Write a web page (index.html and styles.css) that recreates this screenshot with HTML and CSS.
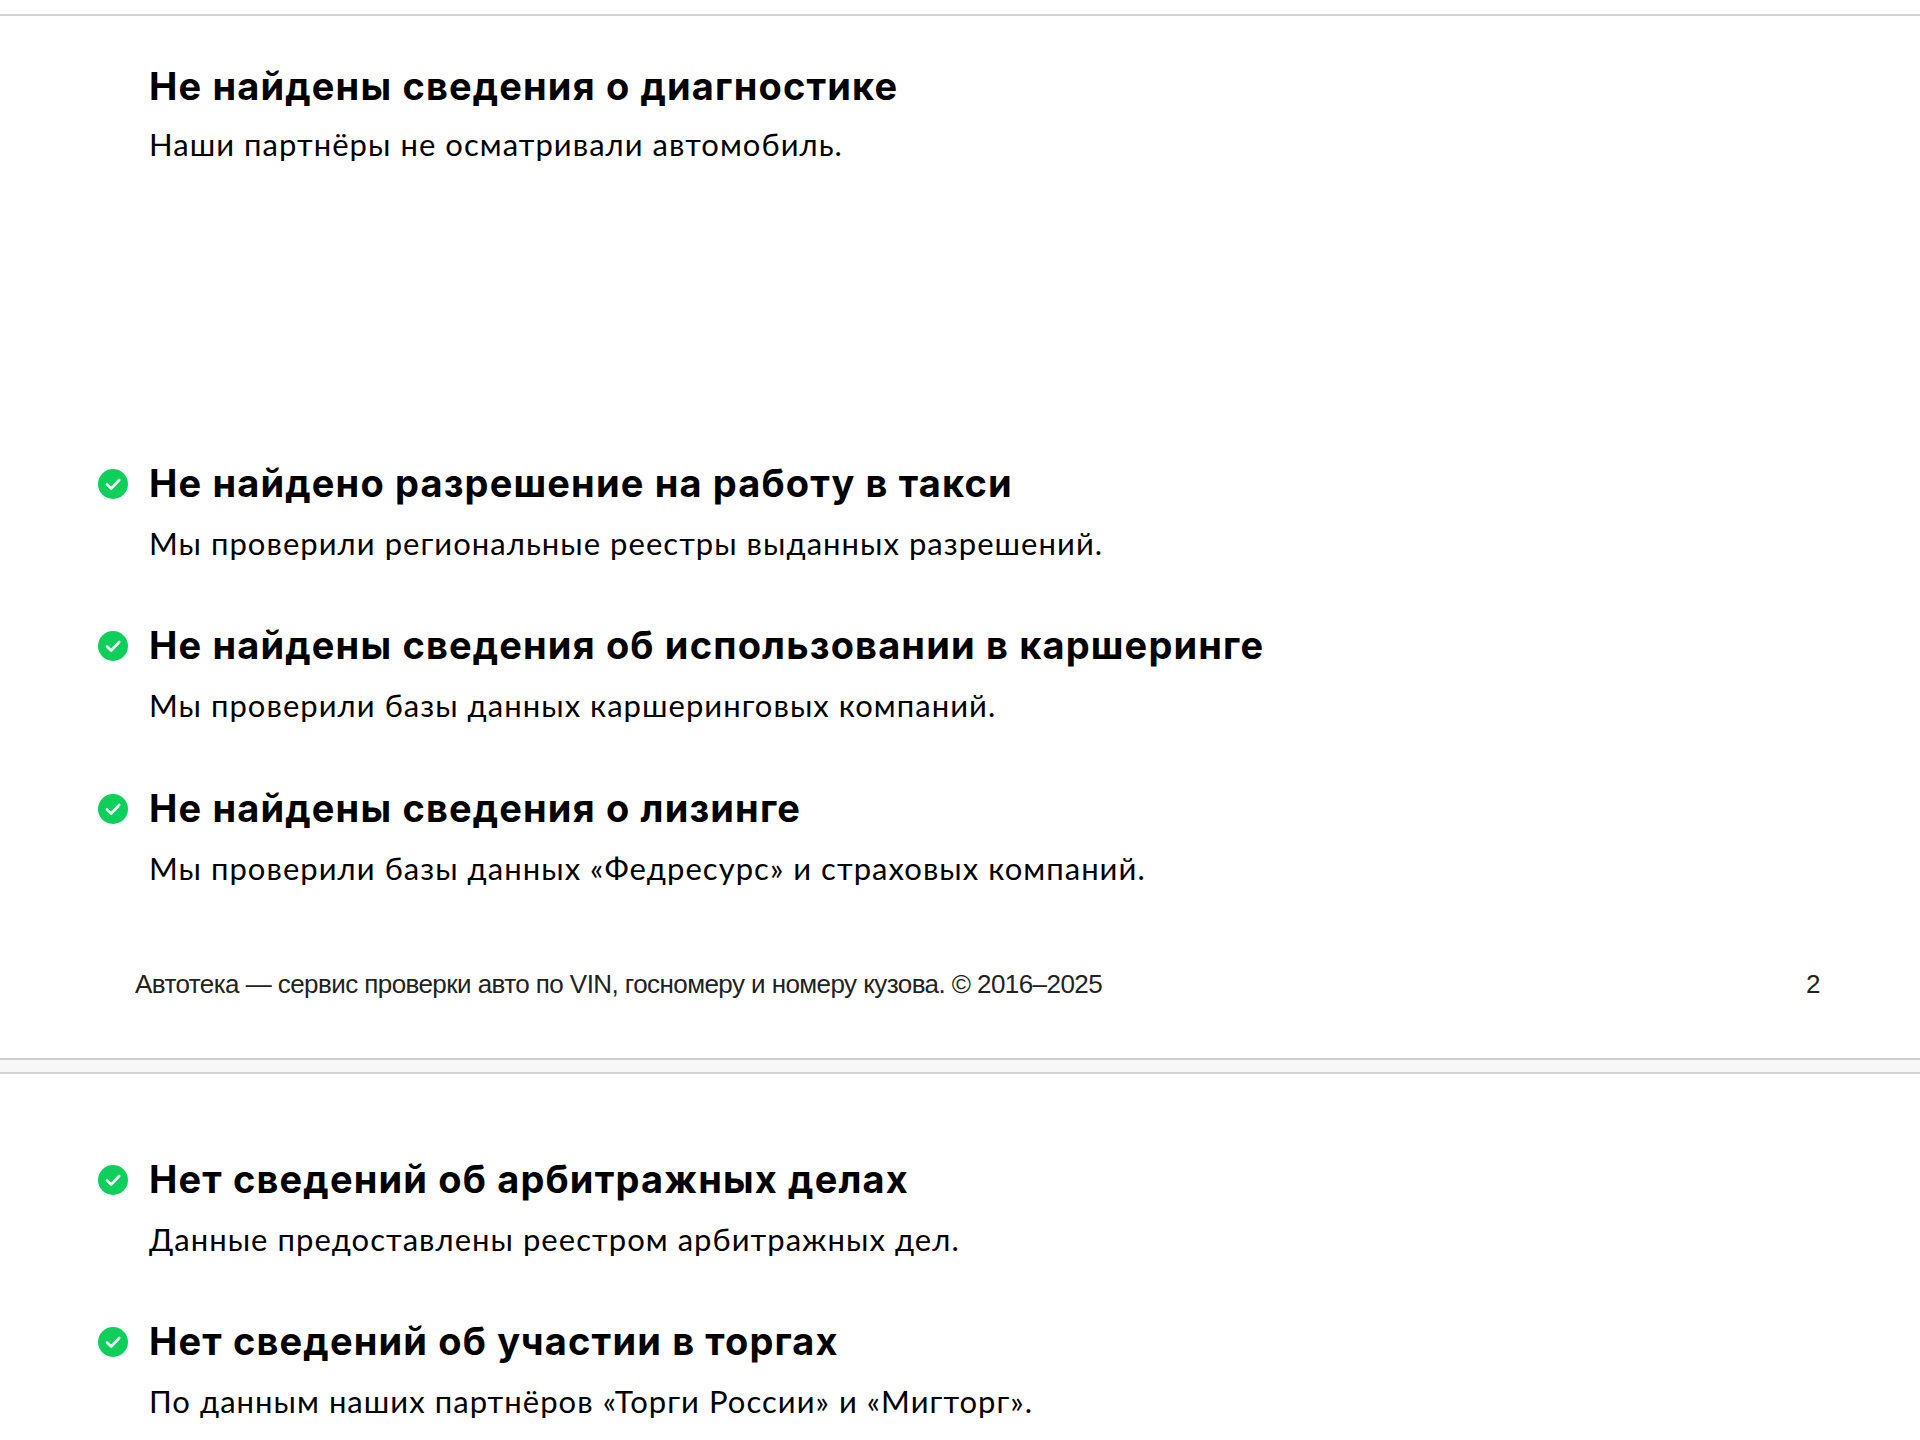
FILE: index.html
```html
<!DOCTYPE html>
<html lang="ru">
<head>
<meta charset="utf-8">
<title>Автотека</title>
<link rel="stylesheet" href="styles.css">
</head>
<body>
<div class="gap-top"></div>
<section class="page page-one">
  <div class="item item-plain">
    <h2>Не найдены сведения о диагностике</h2>
    <p>Наши партнёры не осматривали автомобиль.</p>
  </div>
  <div class="list">
    <div class="item">
      <svg class="check" viewBox="0 0 30 30"><circle cx="15" cy="15" r="15" fill="#0dcf5a"/><path d="M9 15.5l4.2 4L21.2 11" fill="none" stroke="#fff" stroke-width="2.6" stroke-linecap="round" stroke-linejoin="round"/></svg>
      <h2>Не найдено разрешение на работу в такси</h2>
      <p>Мы проверили региональные реестры выданных разрешений.</p>
    </div>
    <div class="item">
      <svg class="check" viewBox="0 0 30 30"><circle cx="15" cy="15" r="15" fill="#0dcf5a"/><path d="M9 15.5l4.2 4L21.2 11" fill="none" stroke="#fff" stroke-width="2.6" stroke-linecap="round" stroke-linejoin="round"/></svg>
      <h2>Не найдены сведения об использовании в каршеринге</h2>
      <p>Мы проверили базы данных каршеринговых компаний.</p>
    </div>
    <div class="item">
      <svg class="check" viewBox="0 0 30 30"><circle cx="15" cy="15" r="15" fill="#0dcf5a"/><path d="M9 15.5l4.2 4L21.2 11" fill="none" stroke="#fff" stroke-width="2.6" stroke-linecap="round" stroke-linejoin="round"/></svg>
      <h2>Не найдены сведения о лизинге</h2>
      <p>Мы проверили базы данных «Федресурс» и страховых компаний.</p>
    </div>
  </div>
  <footer class="foot">
    <span>Автотека — сервис проверки авто по VIN, госномеру и номеру кузова. © 2016–2025</span>
    <span>2</span>
  </footer>
</section>
<div class="gutter"></div>
<section class="page page-two">
  <div class="item">
    <svg class="check" viewBox="0 0 30 30"><circle cx="15" cy="15" r="15" fill="#0dcf5a"/><path d="M9 15.5l4.2 4L21.2 11" fill="none" stroke="#fff" stroke-width="2.6" stroke-linecap="round" stroke-linejoin="round"/></svg>
    <h2>Нет сведений об арбитражных делах</h2>
    <p>Данные предоставлены реестром арбитражных дел.</p>
  </div>
  <div class="item">
    <svg class="check" viewBox="0 0 30 30"><circle cx="15" cy="15" r="15" fill="#0dcf5a"/><path d="M9 15.5l4.2 4L21.2 11" fill="none" stroke="#fff" stroke-width="2.6" stroke-linecap="round" stroke-linejoin="round"/></svg>
    <h2>Нет сведений об участии в торгах</h2>
    <p>По данным наших партнёров «Торги России» и «Мигторг».</p>
  </div>
</section>
</body>
</html>
```

FILE: styles.css
```css
html, body { margin: 0; background: #fff; }
body { height: 1440px; overflow: hidden; color: #000; }
.gap-top { height: 14px; border-bottom: 2px solid #d4d4d4; }
.page { background: #fff; }
.page-one { height: 1042px; position: relative; padding-top: 49px; box-sizing: border-box; display: flex; flex-direction: column; }
.list { margin-top: 234px; display: flex; flex-direction: column; }
.item { position: relative; padding-left: 149px; height: 162.5px; }
.item h2 { margin: 0; font: 700 38px/42px "Inter", "Noto Sans", sans-serif; letter-spacing: 1.15px; white-space: nowrap; }
.item p { margin: 19px 0 0; font: 400 31px/40px "Lato", "Noto Sans", sans-serif; letter-spacing: 1.04px; white-space: nowrap; }
.item-plain p { margin-top: 17px; }
.check { position: absolute; left: 98px; top: 7px; width: 30px; height: 30px; }
.foot { position: absolute; left: 135px; right: 100px; top: 952px; display: flex; justify-content: space-between; font: 400 26px/32px "Liberation Sans", sans-serif; letter-spacing: -0.57px; color: #222; }
.gutter { height: 12px; background: #f7f7f7; border-top: 2px solid #cfcfcf; border-bottom: 2px solid #d4d4d4; }
.page-two { padding-top: 84px; }
.page-two .item { height: 162px; }
```
